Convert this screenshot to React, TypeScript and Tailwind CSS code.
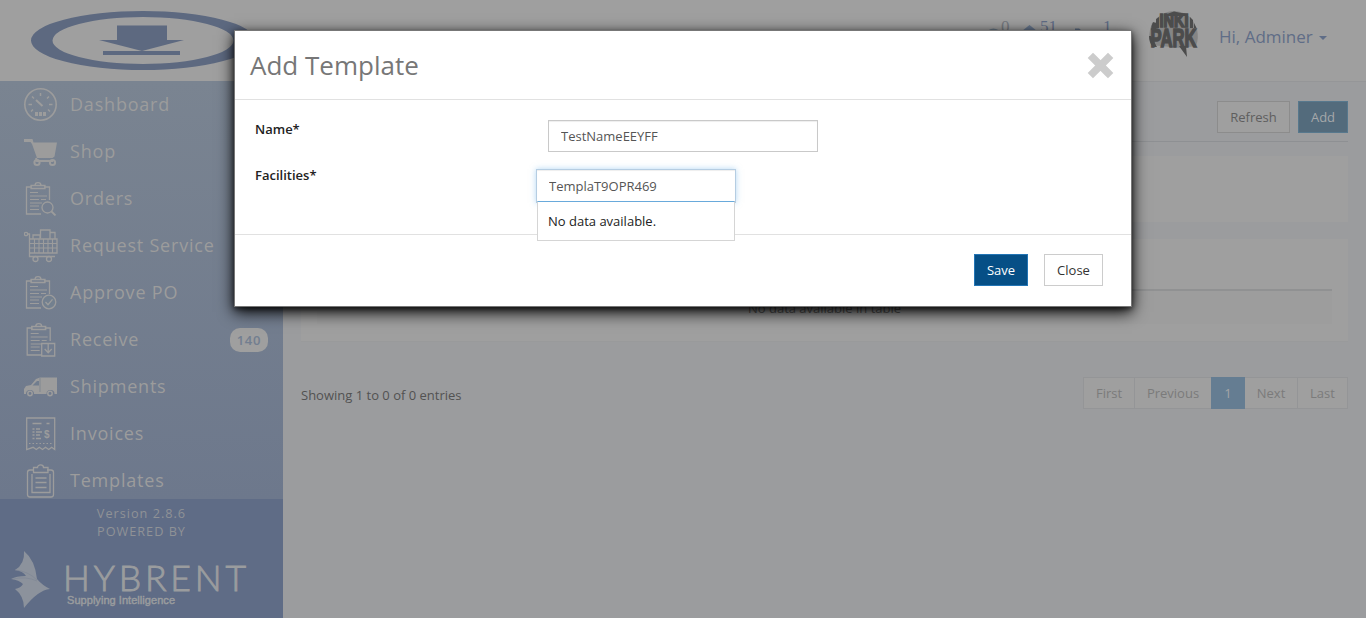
import React from "react";

type IconProps = { children: React.ReactNode };

function Icon({ children }: IconProps) {
  return (
    <svg width="34" height="34" viewBox="0 0 34 34" fill="none" stroke="currentColor" strokeWidth="1.3" className="shrink-0">
      {children}
    </svg>
  );
}

const clip = (
  <>
    <path d="M8 5H2.500v27H17M20 5h5.500v13" />
    <path d="M7 6.500V3.500h4a3 2.800 0 0 1 6 0h4v3z M11.500 3.500h5" />
  </>
);

const lines = <path d="M6 10.500h8M6 14h17M6 17.500h9M17 17.500h5M6 21h12M6 24h9M6 27.500h9" strokeWidth="1.1" />;

const DashboardIcon = () => (
  <Icon>
    <circle cx="16.500" cy="16.500" r="15.700" strokeWidth="1.600" />
    <path d="M16.500 5v3M4.500 16.500H8M25 16.500h3.500M8 8.500l2 2M25 8.500l-2 2M7 23.500l2-2M26 23.500l-2-2" strokeWidth="1.500" />
    <path d="M12 12l6.500 6" strokeWidth="2" />
    <path d="M11 28v-4h3v4zM15 28v-4h3v4zM19 28v-4h3v4z" fill="currentColor" stroke="none" />
  </Icon>
);

const ShopIcon = () => (
  <Icon>
    <path d="M0 4h8.500l1 3.500H33L30.500 21.500l-2 1.500H13L8 9 6.500 7H0z" fill="currentColor" stroke="none" />
    <path d="M12 23l1 3h16" strokeWidth="2" />
    <circle cx="13" cy="27.500" r="2.600" strokeWidth="2" />
    <circle cx="28.500" cy="27.500" r="2.600" strokeWidth="2" />
  </Icon>
);

const OrdersIcon = () => (
  <Icon>
    {clip}
    {lines}
    <circle cx="23.500" cy="25.500" r="5.500" fill="#757f8f" />
    <path d="M27.500 29.500l4 4" strokeWidth="1.800" />
  </Icon>
);

const RequestIcon = () => (
  <Icon>
    <circle cx="2" cy="5" r="1.700" />
    <path d="M4 5h1.500v22.500H31M5.500 10H33v14H5.500M9 10V6h7v4M16.500 9V1h9.500v9M26 3.500h5V10" />
    <path d="M6 14.500h27M6 19h27M10.500 10v14M15 10v14M19.500 10v14M24 10v14M28.500 10v14" strokeWidth="1.100" />
    <circle cx="11.500" cy="30" r="2.500" />
    <circle cx="25" cy="30" r="2.500" />
  </Icon>
);

const ApproveIcon = () => (
  <Icon>
    {clip}
    {lines}
    <circle cx="25" cy="26" r="6.800" fill="#73808f" />
    <path d="M21.500 26l2.500 2.700 4.500-5.400" />
  </Icon>
);

const ReceiveIcon = () => (
  <Icon>
    <g transform="translate(.7 0)">
      {clip}
      {lines}
      <path d="M17 20.500h13v12.500H17z" fill="#727d8f" />
      <path d="M23.500 21v8.500M20 26l3.500 3.700L27 26" />
    </g>
  </Icon>
);

const ShipmentsIcon = () => (
  <Icon>
    <path d="M16 7.500h17V24h-2.500a4 4 0 0 0-8 0H10a4 4 0 0 0-8 0H0v-5l2-3 5-1 5-6z" fill="currentColor" stroke="none" />
    <path d="M8.500 15.500l4.500-4.500h2v4.500z" fill="#717d8e" stroke="none" />
    <path d="M16 7.500V22" stroke="#808790" strokeWidth="1" />
    <circle cx="6" cy="23.500" r="2.200" strokeWidth="1.500" />
    <circle cx="26" cy="23.500" r="2.200" strokeWidth="1.500" />
  </Icon>
);

const InvoicesIcon = () => (
  <Icon>
    <path d="M2.700 32.500V1h28v31.500l-3-2.200-3 2.200-3.200-2.200-3 2.200-3.200-2.200-3 2.200-3.200-2.200z" />
    <path d="M8.500 6.500h9M22.500 6.500h3M8.500 12h2M12 12h4M8.500 15h2M12 15h6M8.500 18h2M12 18h4M8.500 21.500h2M12 21.500h5" strokeWidth="1.400" />
    <path d="M5 26.500h24" strokeDasharray="1.500 2" strokeWidth="1" />
    <text x="20" y="21" fill="currentColor" stroke="none" className="font-['Liberation_Sans'] text-[10px] font-bold">$</text>
  </Icon>
);

const TemplatesIcon = () => (
  <Icon>
    <path d="M10 6H6A2.500 2.500 0 0 0 3.500 8.500v22A2.500 2.500 0 0 0 6 33h21a2.500 2.500 0 0 0 2.500-2.500v-22A2.500 2.500 0 0 0 27 6h-4" />
    <path d="M9.500 8.500v-5h4a3 2.600 0 0 1 6 0h4.500v5zM8 10v18.500h18V10M11.500 14h11M11.500 18.500h11M11.500 23.500h11" />
  </Icon>
);

const menu = [
  { label: "Dashboard", icon: DashboardIcon },
  { label: "Shop", icon: ShopIcon },
  { label: "Orders", icon: OrdersIcon },
  { label: "Request Service", icon: RequestIcon },
  { label: "Approve PO", icon: ApproveIcon },
  { label: "Receive", icon: ReceiveIcon, badge: "140" },
  { label: "Shipments", icon: ShipmentsIcon },
  { label: "Invoices", icon: InvoicesIcon },
  { label: "Templates", icon: TemplatesIcon },
];

function Header() {
  return (
    <header className="flex h-[81px] items-start bg-[#9f9f9f]">
      <svg width="260" height="80" viewBox="0 0 260 80" fill="#5d6980">
        <path fillRule="evenodd" d="M31 40.500a112 29.500 0 1 0 224 0a112 29.500 0 1 0-224 0M52.500 40.500a90.500 23.500 0 1 1 181 0a90.500 23.500 0 1 1-181 0" />
        <path d="M117 25.500h50V40h17L142 51 99 40h18zM103 51h77v4h-77z" />
      </svg>
      <div className="flex flex-1 pl-[726px] pt-[17px] font-['Liberation_Serif',serif] text-[17px] leading-[20px] text-[#5f6d87]">
        <svg width="15" height="20" viewBox="0 0 15 20"><path d="M1 14Q7.500 9 14 14z" fill="#6b7a89" /></svg>
        <span className="w-[21px] text-[#75797f]">0</span>
        <svg width="18" height="20" viewBox="0 0 18 20"><path d="M7.500 8l7.500 6H0z" fill="#65758c" /></svg>
        <span className="w-[35px]">51</span>
        <svg width="28" height="20" viewBox="0 0 28 20"><path d="M0 11.500h4l2 1.500h16v1H0z" fill="#5c6c84" /></svg>
        <span>1</span>
      </div>
      <svg width="52" height="50" viewBox="0 0 52 50" className="mt-[10px] shrink-0 overflow-visible font-['Liberation_Sans',sans-serif] font-bold">
        <path d="M3 35Q-1 26 4 13l5-1V8Q17 1 26 1Q38 1 45 11L49 19Q51 29 48 36L33 38z" fill="#858585" />
        <path d="M3 20Q3 16 5 12l3 1v5h3V7l-3 2v10zM16 5l10-3.500L38 4v2H16zM42 7l3 3v8h-3zM46 13l2.500 5H46zM5 37h4L3 26H1q0 7 4 11zM31 36h7l1 11z" fill="#4c4c4c" />
        <text fill="#4c4c4c" stroke="#4c4c4c" strokeWidth="1.600">
          <tspan x="11.500" y="17" fontSize="18" textLength="29" lengthAdjust="spacingAndGlyphs">INKI</tspan>
          <tspan x="2.500" y="37" fontSize="25" textLength="46" lengthAdjust="spacingAndGlyphs">PARK</tspan>
        </text>
      </svg>
      <button className="mr-[39px] ml-[19px] mt-[24px] flex w-[108px] shrink-0 items-center text-[17px] leading-[26px] text-[#5f6d87]">
        <span className="whitespace-nowrap">Hi, Adminer</span>
        <svg width="8" height="4" viewBox="0 0 8 4" className="ml-auto mt-[2px]" fill="currentColor"><path d="M0 0h8L4 4z" /></svg>
      </button>
    </header>
  );
}

function Sidebar() {
  return (
    <aside className="flex w-[283px] shrink-0 flex-col">
      <nav className="h-[418px] overflow-hidden bg-linear-to-b from-[#7a8491] to-[#6d788c] text-[#9c9c9c]">
        {menu.map(({ label, icon: MenuIcon, badge }) => (
          <div key={label} className="flex h-[47px] items-center pr-[15px] pl-[24px]">
            <MenuIcon />
            <span className="ml-[12px] pb-[2px] text-[18px] leading-[24px] tracking-[0.8px]">{label}</span>
            {badge && (
              <span className="ml-auto flex h-[24px] w-[38px] items-center justify-center rounded-[10px] bg-[#9f9f9f] pt-[3px] text-[13px] font-semibold tracking-[0.8px] text-[#727e90]">{badge}</span>
            )}
          </div>
        ))}
      </nav>
      <div className="h-[119px] bg-[#5f6c86] pt-[5px] text-center text-[13px] leading-[18px] tracking-[1px] text-[#8f9296]">
        <div className="text-[12.700px]">Version 2.8.6</div>
        <div className="text-[12.700px]">POWERED BY</div>
        <svg width="250" height="66" viewBox="0 0 250 66" className="mt-[8px]">
          <path d="M24 3Q35 12 37 31Q42 37 50 41Q38 42 24 60Q24 48 15 41Q21 40 23 36Q19 32 11 31Q16 28 26 28Q23 23 15 22Q25 16 24 3z" fill="#8c929c" />
          <path d="M15 22Q28 23 37 32M13 31Q26 28 37 33" stroke="#7c8594" strokeWidth=".6" fill="none" />
          <text x="63" y="43" fill="#9a9c9e" stroke="#9a9c9e" strokeWidth=".9" textLength="183" fontSize="35.500" className="font-[Lato,sans-serif] font-light tracking-normal">HYBRENT</text>
          <text x="67" y="56" fill="#9a9c9e" stroke="#9a9c9e" strokeWidth=".45" textLength="108" fontSize="11" className="font-['Liberation_Sans',sans-serif] tracking-normal">Supplying Intelligence</text>
        </svg>
      </div>
    </aside>
  );
}

function Content() {
  return (
    <main className="flex flex-1 flex-col bg-[#9b9c9e] pr-[18px] pl-[18px] text-[13px] shadow-[inset_0_1px_0_#959698]">
      <div className="flex h-[61px] shrink-0 justify-end gap-2 border-b border-[#8e9093] pt-5">
        <button className="h-8 w-[73px] border border-[#8c8c8c] bg-[#9f9f9f] pt-[2px] text-[#5e5e5e]">Refresh</button>
        <button className="h-8 w-[50px] border border-[#57788d] bg-[#536b7c] pt-[2px] text-[#a5a8aa]">Add</button>
      </div>
      <div className="mt-[14px] h-[66px] shrink-0 bg-[#9f9f9f]" />
      <div className="mt-[17px] h-[103px] shrink-0 border-b border-[#999a9b] bg-[#9f9f9f] px-4 pt-[50px]">
        <div className="h-[35px] border-t-2 border-[#909192] bg-[#9d9d9d] pt-[8px] text-center leading-[18px] text-[#555]">No data available in table</div>
      </div>
      <div className="flex items-start justify-between pt-[35px]">
        <p className="pt-[8px] leading-[20px] text-[#525252]">Showing 1 to 0 of 0 entries</p>
        <div className="flex h-8 border border-[#949597] bg-[#9f9f9f] leading-[30px] text-[#7b7b7b]">
          <span className="w-[50px] text-center">First</span>
          <span className="w-[77px] border-l border-[#949597] text-center">Previous</span>
          <span className="-my-px w-[34px] bg-[#657d92] pt-px text-center text-[#a4a5a6]">1</span>
          <span className="w-[52px] text-center">Next</span>
          <span className="w-[50px] border-l border-[#949597] text-center">Last</span>
        </div>
      </div>
    </main>
  );
}

function TemplateModal() {
  return (
    <div role="dialog" className="absolute top-[30px] left-[234px] flex h-[277px] w-[898px] flex-col border border-[#777] bg-white text-[13px] shadow-[0_5px_15px_#000,0_2px_5px_rgba(0,0,0,0.5)]">
      <div className="flex h-[69px] shrink-0 items-center justify-between border-b border-[#e1e1e1] pr-[17px] pl-[15px]">
        <h4 className="text-[26px] leading-[36px] text-[#777]">Add Template</h4>
        <svg width="27" height="27" viewBox="0 0 27 27" stroke="#ccc" strokeWidth="7.500" strokeLinecap="square">
          <path d="M6 6l15 15M21 6L6 21" strokeLinejoin="round" />
        </svg>
      </div>
      <div className="flex h-[135px] shrink-0 flex-col border-b border-[#e1e1e1] pt-5 pl-5 text-[#222]">
        <div className="flex h-[49px]">
          <label className="w-[293px] font-semibold leading-[18px]">Name*</label>
          <input readOnly value="TestNameEEYFF" className="h-8 w-[270px] border border-[#c9c9c9] px-3 text-[#555] shadow-[inset_0_1px_1px_rgba(0,0,0,0.07)] outline-none" />
        </div>
        <div className="flex">
          <label className="-mt-[3px] w-[281px] font-semibold leading-[18px]">Facilities*</label>
          <div className="relative">
            <input readOnly value="TemplaT9OPR469" className="h-[34px] w-[200px] border border-[#b5cde2] px-3 text-[#555] shadow-[inset_0_1px_1px_rgba(0,0,0,0.07),0_0_6px_rgba(102,175,233,0.5)] outline-none" />
            <div className="absolute top-[32px] left-px h-[40px] w-[198px] border border-[#d5d5d5] border-t-[#69aadb] bg-white pl-[10px] leading-[38px]">No data available.</div>
          </div>
        </div>
      </div>
      <div className="flex justify-end gap-4 pt-[19px] pr-7">
        <button className="h-8 w-[54px] border border-[#2375b5] bg-[#064f86] pt-[2px] font-medium text-white">Save</button>
        <button className="h-8 w-[59px] border border-[#ccc] bg-white pt-[2px] text-[#333]">Close</button>
      </div>
    </div>
  );
}

export default function App() {
  return (
    <div className="relative flex h-[618px] w-[1366px] flex-col overflow-hidden bg-[#9b9c9e] font-['Open_Sans',sans-serif]">
      <Header />
      <div className="flex flex-1">
        <Sidebar />
        <Content />
      </div>
      <TemplateModal />
    </div>
  );
}
